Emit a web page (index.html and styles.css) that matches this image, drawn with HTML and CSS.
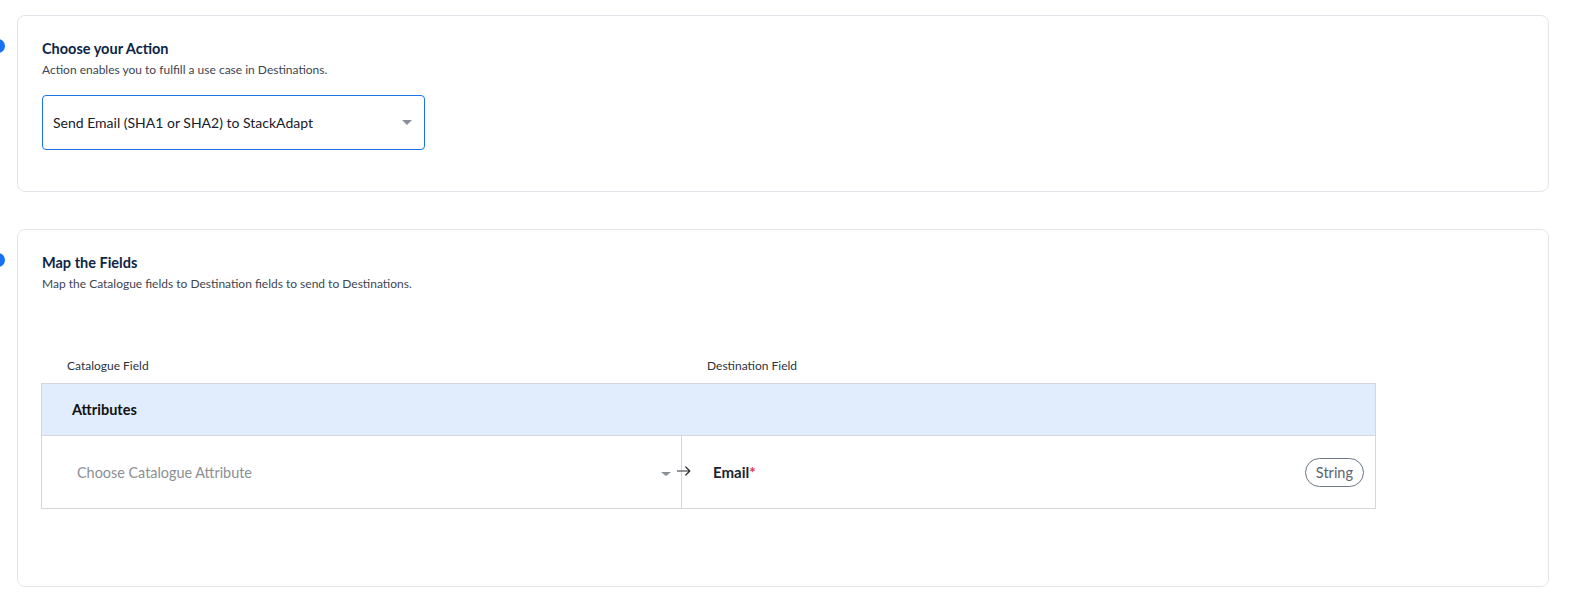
FILE: index.html
```html
<!DOCTYPE html>
<html>
<head>
<meta charset="utf-8">
<link rel="stylesheet" href="styles.css">
</head>
<body>
<div class="page">
  <section class="card card-action">
    <span class="step-dot"></span>
    <h2 class="card-title">Choose your Action</h2>
    <p class="card-sub">Action enables you to fulfill a use case in Destinations.</p>
    <div class="select">
      <span class="select-value">Send Email (SHA1 or SHA2) to StackAdapt</span>
      <span class="caret"></span>
    </div>
  </section>

  <section class="card card-map">
    <span class="step-dot"></span>
    <h2 class="card-title">Map the Fields</h2>
    <p class="card-sub">Map the Catalogue fields to Destination fields to send to Destinations.</p>

    <div class="map-table">
      <div class="col-labels">
        <div class="col-label left">Catalogue Field</div>
        <div class="col-label right">Destination Field</div>
      </div>
      <div class="grid">
        <div class="group-row">Attributes</div>
        <div class="field-row">
          <div class="cell-left">
            <span class="placeholder">Choose Catalogue Attribute</span>
            <span class="caret small"></span>
            <svg class="arrow" width="14" height="10" viewBox="0 0 14 10"><path d="M0.5 5H12.8M8.8 1L12.8 5L8.8 9" fill="none" stroke="#2a2f36" stroke-width="1.2" stroke-linecap="round" stroke-linejoin="round"/></svg>
          </div>
          <div class="cell-right">
            <span class="dest-name">Email<span class="req">*</span></span>
            <span class="pill">String</span>
          </div>
        </div>
      </div>
    </div>
  </section>
</div>
</body>
</html>
```

FILE: styles.css
```css
* { box-sizing: border-box; }
html, body { margin: 0; padding: 0; background: #fff; }
body {
  font-family: Lato, "Noto Sans", "Liberation Sans", sans-serif;
  color: #1d2733;
}
.page {
  padding: 15px 23px 8px 17px;
  display: flex;
  flex-direction: column;
  gap: 37px;
}
.card {
  position: relative;
  border: 1px solid #e2e5ea;
  border-radius: 8px;
  padding: 23px 24px 0 24px;
  background: #fff;
}
.card-action { height: 177px; }
.card-map { height: 358px; }
.step-dot {
  position: absolute;
  left: -27px;
  top: 23px;
  width: 14px;
  height: 14px;
  border-radius: 50%;
  background: #1672f3;
}
.card-title {
  margin: 0;
  font-size: 14.5px;
  line-height: 20px;
  font-weight: 700;
  color: #0d2548;
}
.card-sub {
  margin: 3px 0 0 0;
  font-size: 12px;
  line-height: 16px;
  color: #3d4652;
}
.select {
  margin-top: 17px;
  width: 383px;
  height: 55px;
  border: 1px solid #1a73e8;
  border-radius: 4px;
  display: flex;
  align-items: center;
  justify-content: space-between;
  padding: 0 12px 0 10px;
}
.select-value {
  font-size: 14px;
  color: #17202b;
}
.caret {
  width: 0;
  height: 0;
  border-left: 5px solid transparent;
  border-right: 5px solid transparent;
  border-top: 5px solid #8a8f96;
}
.map-table {
  margin-top: 66px;
  margin-left: -1px;
  width: 1335px;
}
.col-labels {
  display: flex;
  height: 25px;
  align-items: flex-start;
}
.col-label {
  font-size: 12px;
  line-height: 16px;
  color: #2b3440;
}
.col-label.left { width: 640px; padding-left: 26px; }
.col-label.right { padding-left: 26px; }
.grid {
  border: 1px solid #d4d8de;
}
.group-row {
  height: 52px;
  background: #e1edfc;
  border-bottom: 1px solid #d4d8de;
  display: flex;
  align-items: center;
  padding-left: 30px;
  font-size: 14.5px;
  font-weight: 700;
  color: #111;
}
.field-row {
  display: flex;
  height: 72px;
}
.cell-left {
  width: 640px;
  border-right: 1px solid #d4d8de;
  display: flex;
  align-items: center;
  padding-left: 35px;
  position: relative;
}
.placeholder {
  font-size: 14.4px;
  color: #8c8f94;
  flex: 1;
}
.caret.small {
  border-left-width: 5px;
  border-right-width: 5px;
  border-top-width: 4px;
  margin-right: 10px;
  margin-top: 3px;
}
.arrow {
  position: absolute;
  right: -10px;
  top: 30px;
}
.cell-right {
  flex: 1;
  display: flex;
  align-items: center;
  justify-content: space-between;
  padding: 0 11px 0 31px;
}
.dest-name {
  font-size: 15px;
  font-weight: 700;
  color: #1a2330;
}
.req { color: #e8303a; font-weight: 700; }
.pill {
  height: 29px;
  padding: 0 10px;
  border: 1px solid #6b7785;
  border-radius: 15px;
  display: flex;
  align-items: center;
  font-size: 14.5px;
  color: #5a6570;
}
```
